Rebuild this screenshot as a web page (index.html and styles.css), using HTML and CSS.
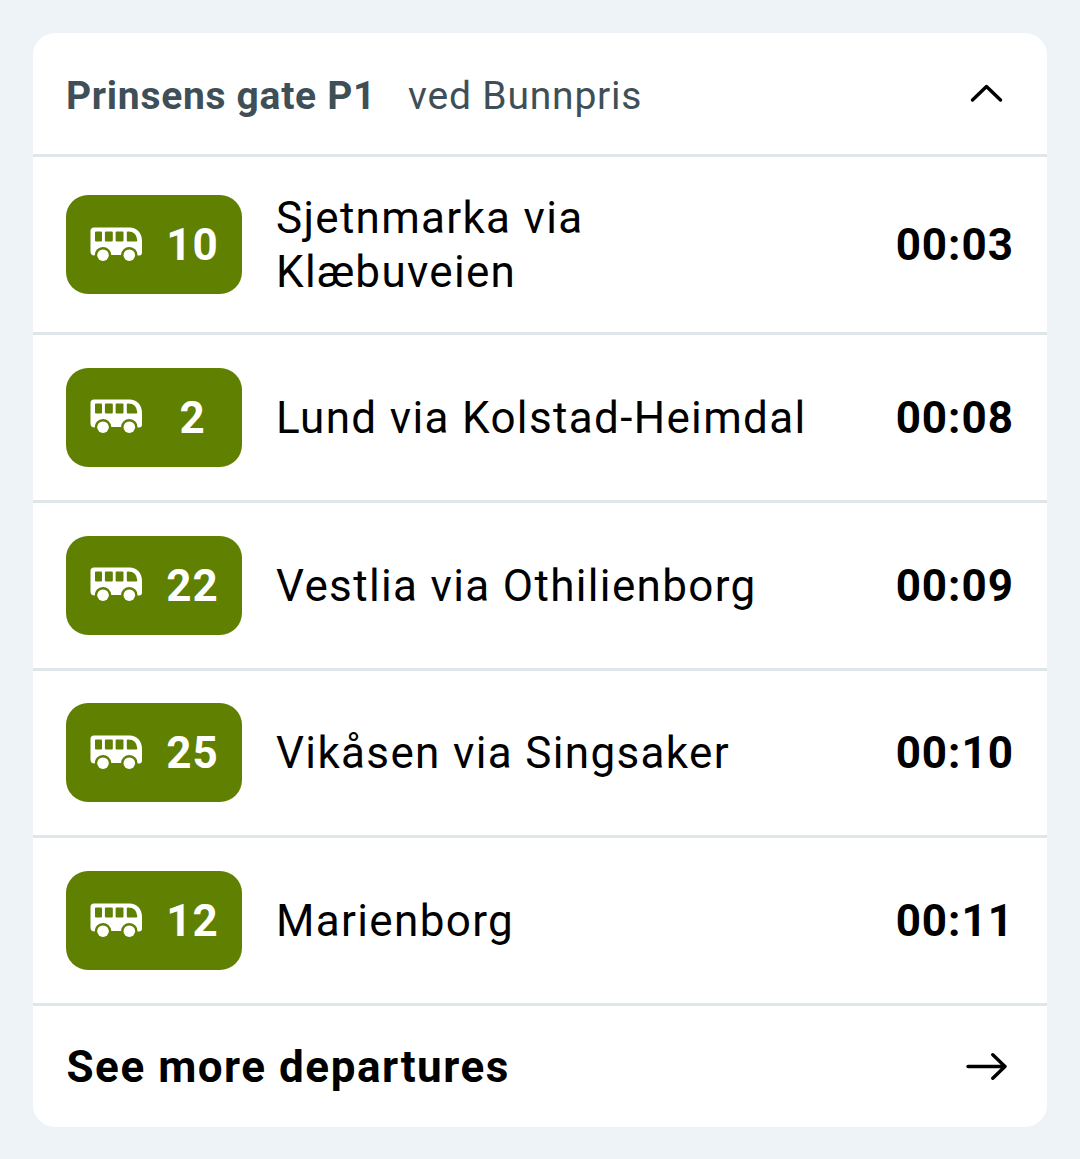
FILE: index.html
```html
<!DOCTYPE html>
<html lang="en">
<head>
<meta charset="utf-8">
<title>Departures</title>
<link rel="stylesheet" href="styles.css">
</head>
<body>
<svg class="defs" aria-hidden="true">
  <symbol id="bus" viewBox="0 0 52 36">
    <path fill-rule="evenodd" d="M4 .5H39.5C47 .5 52 6 52 14V25.5Q52 28.5 49 28.5H47.6A8.3 8.3 0 0 0 31 28H21.3A8.3 8.3 0 0 0 4.7 28.5Q.5 28.5 .5 24.5V4Q.5 .5 4 .5ZM6 4.5Q5 4.5 5 5.5V13.5Q5 14.5 6 14.5H11Q12 14.5 12 13.5V5.5Q12 4.5 11 4.5ZM15.9 4.5Q14.9 4.5 14.9 5.5V13.5Q14.9 14.5 15.9 14.5H21.8Q22.8 14.5 22.8 13.5V5.5Q22.8 4.5 21.8 4.5ZM26.6 4.5Q25.6 4.5 25.6 5.5V13.5Q25.6 14.5 26.6 14.5H32.5Q33.5 14.5 33.5 13.5V5.5Q33.5 4.5 32.5 4.5ZM37.8 4.5Q36.8 4.5 36.8 5.5V13.5Q36.8 14.5 37.8 14.5H46.3Q47.4 14.5 47.3 13.2Q46.5 4.5 38.5 4.5Z"/>
    <circle cx="13" cy="28.2" r="5.8"/><circle cx="39.3" cy="28.2" r="5.8"/>
  </symbol>
</svg>
<main class="card">
  <header class="header"><h1 class="stop">Prinsens gate P1</h1><span class="place">ved Bunnpris</span>
    <svg class="chevron" viewBox="0 0 34 20"><path d="M3.5 17L17.5 3.5L31.5 17"/></svg></header>
  <ul class="departures">
    <li class="row row-tall"><div class="badge"><svg class="bus"><use href="#bus"/></svg><span class="line">10</span></div><span class="dest">Sjetnmarka via<br>Klæbuveien</span><time class="time">00:03</time></li>
    <li class="row"><div class="badge"><svg class="bus"><use href="#bus"/></svg><span class="line">2</span></div><span class="dest">Lund via Kolstad-Heimdal</span><time class="time">00:08</time></li>
    <li class="row"><div class="badge"><svg class="bus"><use href="#bus"/></svg><span class="line">22</span></div><span class="dest">Vestlia via Othilienborg</span><time class="time">00:09</time></li>
    <li class="row"><div class="badge"><svg class="bus"><use href="#bus"/></svg><span class="line">25</span></div><span class="dest">Vikåsen via Singsaker</span><time class="time">00:10</time></li>
    <li class="row"><div class="badge"><svg class="bus"><use href="#bus"/></svg><span class="line">12</span></div><span class="dest">Marienborg</span><time class="time">00:11</time></li>
  </ul>
  <footer class="more"><span>See more departures</span><svg class="arrow" viewBox="0 0 42 30"><path d="M3 14.5H40M27.8 2.8L40 14.5L27.8 26.2"/></svg></footer>
</main>
</body>
</html>
```
FILE: styles.css
```css
* { box-sizing: border-box; }
body { margin: 0; padding: 33px; height: 1159px; background: #edf3f6; color: #000; font-family: Roboto, sans-serif; }
.defs { display: none; }
.card { height: 1094px; background: #fff; border-radius: 22px; }
.header { display: flex; align-items: center; height: 121px; padding: 4px 44px 0 33px; color: #3f4f57; font-size: 39px; letter-spacing: 0.7px; }
.stop { margin: 0 32px 0 0; font-size: inherit; font-weight: 700; }
.place { letter-spacing: 0.8px; }
.chevron { width: 34px; height: 20px; margin: 0 0 5px auto; fill: none; stroke: #000; stroke-width: 3.4; stroke-linecap: round; stroke-linejoin: round; }
.departures { margin: 0; padding: 0; list-style: none; }
.row { display: flex; align-items: center; height: 167.75px; padding: 0 33px; border-top: 3px solid #dfe6e9; }
.row-tall { height: 178px; }
.row:not(.row-tall) .line, .row:not(.row-tall) .dest, .row:not(.row-tall) .time { padding-top: 1.1px; }
.badge { display: flex; align-items: center; flex: none; width: 176px; height: 99px; padding-left: 24px; margin-right: 34px; border-radius: 22px; background: #5f8000; color: #fff; }
.bus { flex: none; width: 52px; height: 36px; fill: #fff; }
.line { width: 54px; margin-left: 23.5px; text-align: center; font-size: 44px; font-weight: 700; letter-spacing: 1px; }
.dest { font-size: 44px; line-height: 54px; letter-spacing: 1.35px; }
.row-tall .dest { letter-spacing: 1.3px; }
.time { margin-left: auto; font-size: 44px; font-weight: 700; letter-spacing: 1px; }
.more { display: flex; align-items: center; justify-content: space-between; height: 124px; padding: 1px 40px 0 33.5px; border-top: 3px solid #dfe6e9; font-size: 44px; font-weight: 700; letter-spacing: 1.52px; }
.arrow { width: 42px; height: 30px; fill: none; stroke: #000; stroke-width: 3.4; stroke-linecap: round; stroke-linejoin: round; }
```
